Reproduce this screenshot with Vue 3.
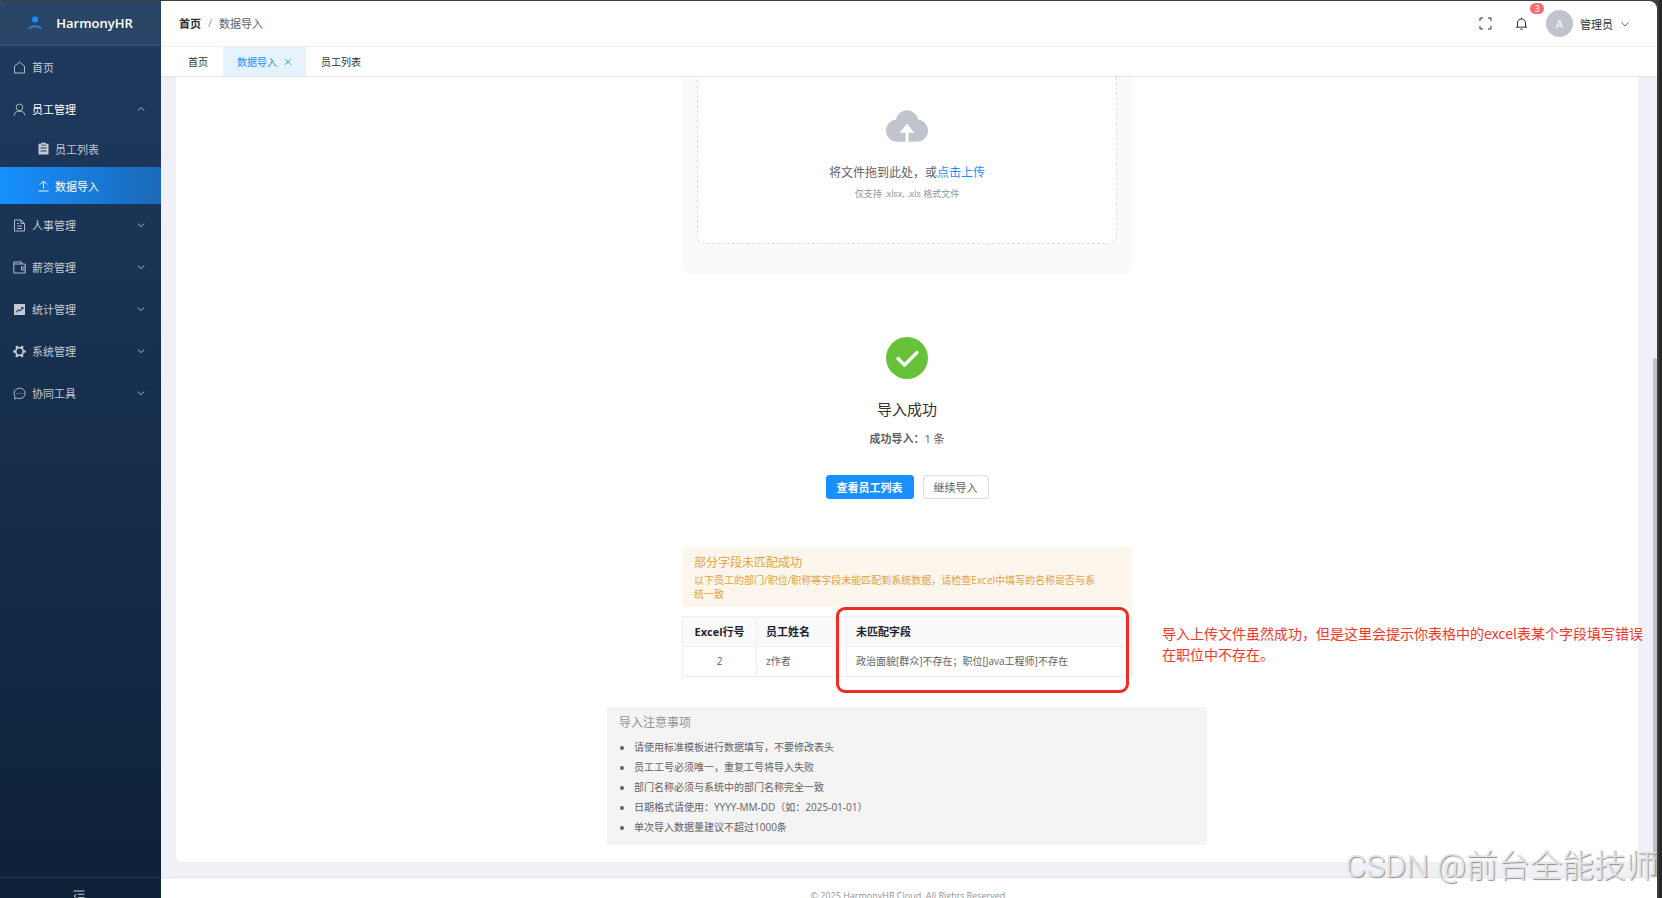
<template>
  <div class="window">
    <div class="app">
      <aside class="sidebar">
        <div class="logo">
          <svg class="logo-icon" viewBox="0 0 14 14">
            <circle cx="7" cy="3.4" r="3" />
            <path d="M0.8 12.6C4 9.6 10 9.6 13.2 12.6" />
          </svg>
          <span>HarmonyHR</span>
        </div>

        <nav class="menu">
          <template v-for="item in menus" :key="item.name">
            <button class="menu-item" :class="{ open: item.children }">
              <svg class="icon" viewBox="0 0 13 13">
                <path :class="{ solid: item.solid }" :d="item.icon" />
              </svg>
              <span class="menu-name">{{ item.name }}</span>
              <svg v-if="item.arrow" class="arrow" viewBox="0 0 8 8">
                <path :d="item.children ? 'M0.8 5.6L4 2.6L7.2 5.6' : 'M0.8 2.6L4 5.6L7.2 2.6'" />
              </svg>
            </button>
            <div v-if="item.children" class="sub-menu">
              <a
                v-for="child in item.children"
                :key="child.name"
                href="#"
                class="sub-item"
                :class="{ active: child.name === current }"
                @click.prevent="current = child.name"
              >
                <svg class="icon" viewBox="0 0 13 13">
                  <path :class="{ solid: child.solid }" :d="child.icon" />
                </svg>
                <span>{{ child.name }}</span>
              </a>
            </div>
          </template>
        </nav>

        <button class="collapse" aria-label="折叠菜单">
          <svg viewBox="0 0 12 12">
            <path d="M0.5 1H11.5M5 4.3H11.5M5 7.6H11.5M0.5 11H11.5M3.500 4L1 6L3.500 8" />
          </svg>
        </button>
      </aside>

      <div class="body">
        <header class="header">
          <div class="breadcrumb">
            <a href="#" @click.prevent>首页</a>
            <span class="slash">/</span>
            <span>数据导入</span>
          </div>
          <div class="tools">
            <button class="tool-btn" aria-label="全屏">
              <svg viewBox="0 0 13 13">
                <path d="M1 4V1H4M9 1H12V4M12 9V12H9M4 12H1V9" />
              </svg>
            </button>
            <button class="tool-btn bell" aria-label="通知">
              <svg viewBox="0 0 13 13">
                <path d="M1 10.2H12M2.5 10V6C2.5 3.5 4.2 2 6.5 2S10.5 3.5 10.5 6V10M6.5 0.6V2M5.3 12.2H7.7" />
              </svg>
              <span class="badge">3</span>
            </button>
            <button class="user">
              <span class="avatar">A</span>
              <span>管理员</span>
              <svg class="user-arrow" viewBox="0 0 8 8">
                <path d="M0.5 2.4L4 5.8L7.5 2.4" />
              </svg>
            </button>
          </div>
        </header>

        <div class="tabs">
          <button
            v-for="tab in tabs"
            :key="tab"
            class="tab"
            :class="{ active: tab === current }"
          >
            {{ tab }}
            <svg v-if="tab === current" class="close" viewBox="0 0 8 8">
              <path d="M1.2 1.2L6.8 6.8M6.8 1.2L1.2 6.8" />
            </svg>
          </button>
        </div>

        <main class="main">
          <div class="card">
            <section class="upload">
              <div class="dragger">
                <svg class="cloud" viewBox="64 192 896 672">
                  <path d="M544 864V672h128L512 480 352 672h128v192H320v-1.6c-5.4.3-10.5 1.6-16 1.6A240 240 0 0 1 64 624c0-123 93-223.500 212.600-237.200A239.800 239.800 0 0 1 512 192a239.900 239.900 0 0 1 235.500 194.800C867 400.500 960 501 960 624a240 240 0 0 1-240 240c-5.400 0-10.600-1.300-16-1.600v1.600z" />
                </svg>
                <p class="drag-text">将文件拖到此处，或<a href="#" @click.prevent>点击上传</a></p>
                <p class="drag-tip">仅支持 .xlsx, .xls 格式文件</p>
              </div>
            </section>

            <section class="result">
              <svg class="success" viewBox="0 0 42 42">
                <circle cx="21" cy="21" r="21" />
                <path d="M12 21.500L18.500 28L31 15.500" />
              </svg>
              <h2>导入成功</h2>
              <p><strong>成功导入：</strong>1 条</p>
              <div class="actions">
                <button class="btn primary">查看员工列表</button>
                <button class="btn">继续导入</button>
              </div>
            </section>

            <section class="unmatched">
              <div class="alert">
                <h3>部分字段未匹配成功</h3>
                <p>以下员工的部门/职位/职称等字段未能匹配到系统数据，请检查Excel中填写的名称是否与系<br>统一致</p>
              </div>
              <table>
                <thead>
                  <tr>
                    <th class="col-row">Excel行号</th>
                    <th class="col-name">员工姓名</th>
                    <th>未匹配字段</th>
                  </tr>
                </thead>
                <tbody>
                  <tr v-for="row in rows" :key="row.line">
                    <td class="col-row">{{ row.line }}</td>
                    <td>{{ row.name }}</td>
                    <td>{{ row.fields }}</td>
                  </tr>
                </tbody>
              </table>
              <div class="mark"></div>
              <p class="note">导入上传文件虽然成功，但是这里会提示你表格中的excel表某个字段填写错误<br>在职位中不存在。</p>
            </section>

            <section class="tips">
              <h3>导入注意事项</h3>
              <ul>
                <li v-for="tip in tips" :key="tip">{{ tip }}</li>
              </ul>
            </section>
          </div>
          <div class="scrollbar"></div>
        </main>

        <footer class="footer">© 2025 HarmonyHR Cloud. All Rights Reserved.</footer>
      </div>
    </div>
    <div class="watermark">CSDN @前台全能技师</div>
  </div>
</template>

<script setup>
import { ref } from 'vue'

const current = ref('数据导入')

const menus = [
  { name: '首页', icon: 'M1.500 5.200L6.500 1L11.500 5.200V12H1.500Z' },
  {
    name: '员工管理',
    icon: 'M6.500 1A3.300 3.300 0 1 1 6.500 7.600A3.300 3.300 0 1 1 6.500 1M1.200 12.500C1.400 10 2.500 8.800 4.500 8.400H8.500C10.500 8.800 11.600 10 11.800 12.500',
    arrow: true,
    children: [
      {
        name: '员工列表',
        icon: 'M1.500 1.800H4V0.800H9V1.800H11.500V12.500H1.500ZM4 2.800V3.600H9V2.800ZM3.500 5.500V6.500H9.500V5.500ZM3.500 8.500V9.500H9.500V8.500Z',
        solid: true
      },
      { name: '数据导入', icon: 'M1.500 12H11.500M6.500 9.500V2M3 5.500L6.500 2L10 5.500' }
    ]
  },
  { name: '人事管理', icon: 'M1.500 1H8L11.500 4.500V12H1.500ZM8 1V4.500H11.500M4 4.500H6M4 7H9M4 9.500H9', arrow: true },
  { name: '薪资管理', icon: 'M8.500 3V1H0.800V12H12.200V3H0.800M12 6H8.500V9H12M9.800 7.500H10.600', arrow: true },
  {
    name: '统计管理',
    icon: 'M1 1H12V12H1ZM2.600 9.100L3.200 9.700L5.500 7.400L7.200 8.400L9.700 5.600V6.500H10.400V4H7.900V4.700H9.100L7 7.200L5.300 6.300Z',
    arrow: true,
    solid: true
  },
  {
    name: '系统管理',
    icon: 'M4.300 0.500L5.500 2H7.500L8.700 0.500L10.700 1.700L10 3.500L11 5.200L12.800 5.400V7.600L11 7.800L10 9.500L10.700 11.300L8.700 12.500L7.500 11H5.500L4.300 12.500L2.300 11.300L3 9.500L2 7.800L0.200 7.600V5.400L2 5.200L3 3.500L2.300 1.700ZM6.500 3.600A2.900 2.900 0 1 0 6.500 9.400A2.900 2.900 0 1 0 6.500 3.600Z',
    arrow: true,
    solid: true
  },
  {
    name: '协同工具',
    icon: 'M1.500 12L2 9.500C-0.500 5 2.500 1.200 6.700 1.200C13.800 1.200 13.800 11.500 6.700 11.500C5.500 11.500 4.500 11.300 3.800 11ZM3.600 6.500H4.400M6.200 6.500H7M8.800 6.500H9.600',
    arrow: true
  }
]

const tabs = ['首页', '数据导入', '员工列表']

const rows = [
  { line: 2, name: 'z作者', fields: '政治面貌[群众]不存在；职位[Java工程师]不存在' }
]

const tips = [
  '请使用标准模板进行数据填写，不要修改表头',
  '员工工号必须唯一，重复工号将导入失败',
  '部门名称必须与系统中的部门名称完全一致',
  '日期格式请使用：YYYY-MM-DD（如：2025-01-01）',
  '单次导入数据量建议不超过1000条'
]
</script>

<style>
body {
  margin: 0;
  background: #38393b;
}
</style>

<style scoped>
.window {
  position: relative;
  box-sizing: border-box;
  height: 100vh;
  padding: 1px 5px 0 0;
  overflow: hidden;
  background: linear-gradient(to left, #262828 3px, #3d3f3f 3px);
  font-family: "Open Sans", "Noto Sans CJK SC", sans-serif;
  font-size: 11px;
  color: #303133;
}

/* 页面比窗口略高，页脚被截断 */
.app {
  display: flex;
  height: calc(100vh + 15px);
  border-radius: 4px 8px 0 0;
  overflow: hidden;
  background: #fff;
}

button {
  margin: 0;
  padding: 0;
  border: none;
  background: none;
  font: inherit;
  color: inherit;
  cursor: pointer;
}

a {
  text-decoration: none;
  color: inherit;
}

h2, h3, p, ul {
  margin: 0;
  padding: 0;
  font-weight: normal;
}

svg {
  display: block;
  fill: none;
  stroke: currentColor;
}

/* 侧边栏 */
.sidebar {
  display: flex;
  flex-direction: column;
  flex: none;
  width: 161px;
  background: linear-gradient(180deg, #1e3a5f 0%, #0d2137 100%);
  color: #c3cad3;
}

.logo {
  display: flex;
  align-items: center;
  justify-content: center;
  gap: 14px;
  height: 44px;
  border-bottom: 1px solid #3c5473;
  background: #2a4566;
  color: #fff;
  font-size: 13px;
  font-weight: 600;
}

.logo-icon {
  width: 14px;
  height: 14px;
  color: #1890ff;
  stroke-width: 1.5;
}

.logo-icon circle {
  fill: currentColor;
  stroke: none;
}

.menu {
  flex: 1;
}

.menu-item {
  display: flex;
  align-items: center;
  gap: 6px;
  width: 100%;
  height: 42px;
  padding: 0 16px 0 13px;
  text-align: left;
}

.menu-item.open {
  color: #fff;
}

.menu-name {
  flex: 1;
}

.icon {
  width: 13px;
  height: 13px;
  color: #c3cad3;
  stroke-width: 0.9;
}

.solid {
  fill: currentColor;
  fill-rule: evenodd;
  stroke: none;
}

.arrow {
  width: 8px;
  height: 8px;
  color: #a9b3c0;
}

.sub-item {
  display: flex;
  align-items: center;
  gap: 5px;
  height: 37px;
  padding-left: 37px;
}

.sub-item.active,
.sub-item.active .icon {
  color: #fff;
}

.sub-item.active {
  background: linear-gradient(90deg, #1890ff 0%, #1a69b8 100%);
}

.collapse {
  display: flex;
  align-items: center;
  justify-content: center;
  height: 37px;
  padding-right: 4px;
  border-top: 1px solid #263a50;
}

.collapse svg {
  width: 12px;
  height: 12px;
}

/* 顶部 */
.body {
  display: flex;
  flex-direction: column;
  flex: 1;
  min-width: 0;
}

.header {
  display: flex;
  align-items: center;
  justify-content: space-between;
  height: 45px;
  padding: 0 28px 0 18px;
  border-bottom: 1px solid #f0f0f0;
}

.breadcrumb {
  display: flex;
  padding-bottom: 2px;
  color: #606266;
}

.breadcrumb a {
  color: #303133;
  font-weight: 700;
}

.slash {
  margin: 0 7px;
  color: #909399;
}

.tools,
.user {
  display: flex;
  align-items: center;
}

.tool-btn {
  position: relative;
  margin-right: 23px;
}

.tool-btn svg {
  width: 13px;
  height: 13px;
}

.tool-btn.bell {
  margin-right: 18px;
}

.badge {
  position: absolute;
  left: 15px;
  top: -14px;
  width: 14px;
  height: 11px;
  border-radius: 6px;
  background: #f56c6c;
  color: #fff;
  font-size: 9px;
  line-height: 11px;
  text-align: center;
}

.avatar {
  width: 27px;
  height: 27px;
  margin-right: 7px;
  border-radius: 50%;
  background: #c0c4cc;
  color: #fff;
  line-height: 27px;
}

.user-arrow {
  width: 8px;
  height: 8px;
  margin-left: 8px;
  color: #606266;
}

.tabs {
  display: flex;
  height: 29px;
  padding-left: 12px;
  border-bottom: 1px solid #e4e4e6;
}

.tab {
  display: flex;
  align-items: center;
  gap: 7px;
  padding: 0 15px;
  font-size: 10px;
}

.tab.active {
  padding: 0 14px;
  background: #e6f3ff;
  color: #1890ff;
}

.close {
  width: 8px;
  height: 8px;
  stroke-width: 0.8;
}

/* 内容区 */
.main {
  position: relative;
  flex: 1;
  min-height: 0;
  padding: 0 19px 15px 15px;
  overflow: hidden;
  background: #eff1f6;
}

.card {
  display: flex;
  flex-direction: column;
  align-items: center;
  box-sizing: border-box;
  height: 100%;
  border-radius: 0 0 6px 6px;
  background: #fff;
}

.scrollbar {
  position: absolute;
  top: 281px;
  right: 0;
  bottom: 0;
  width: 4px;
  border-radius: 2px 2px 0 0;
  background: #c1c1c1;
}

.upload {
  box-sizing: border-box;
  width: 450px;
  padding: 0 15px 30px;
  border-radius: 0 0 8px 8px;
  background: #fafafa;
}

.dragger {
  display: flex;
  flex-direction: column;
  align-items: center;
  padding: 33px 0 42px;
  border: 1px dashed #dcdfe6;
  border-top: none;
  border-radius: 0 0 8px 8px;
  background: #fff;
}

.cloud {
  width: 42px;
  height: 32px;
  margin-bottom: 21px;
  fill: #c0c4cc;
  stroke: none;
}

.drag-text {
  font-size: 12px;
  line-height: 20px;
  color: #606266;
}

.drag-text a {
  color: #1890ff;
}

.drag-tip {
  margin-top: 4px;
  font-size: 9px;
  line-height: 14px;
  color: #909399;
}

.result {
  display: flex;
  flex-direction: column;
  align-items: center;
  padding: 63px 0 48px;
}

.success {
  width: 42px;
  height: 42px;
}

.success circle {
  fill: #67c23a;
  stroke: none;
}

.success path {
  stroke: #fff;
  stroke-width: 3.4;
  stroke-linecap: round;
  stroke-linejoin: round;
}

.result h2 {
  margin-top: 20px;
  font-size: 15px;
  line-height: 20px;
}

.result p {
  margin-top: 12px;
  line-height: 16px;
  color: #606266;
}

.actions {
  display: flex;
  gap: 9px;
  margin-top: 28px;
}

.btn {
  height: 24px;
  padding: 0 10px;
  border: 1px solid #dcdfe6;
  border-radius: 3px;
  background: #fff;
  color: #606266;
}

.btn.primary {
  border-color: #1890ff;
  background: #1890ff;
  color: #fff;
  font-weight: 700;
}

.unmatched {
  position: relative;
  width: 450px;
}

.alert {
  padding: 6px 12px;
  border-radius: 3px;
  background: #fdf6ec;
  color: #e6a23c;
}

.alert h3 {
  font-size: 12px;
  line-height: 20px;
}

.alert p {
  font-size: 10px;
  line-height: 14px;
}

table {
  width: 100%;
  margin-top: 9px;
  border-collapse: collapse;
  table-layout: fixed;
}

th,
td {
  box-sizing: border-box;
  height: 30px;
  padding: 0 9px 2px;
  border: 1px solid #ebeef5;
  text-align: left;
}

th {
  background: #fafafa;
  color: #1f2430;
  font-weight: 700;
}

td {
  font-size: 10px;
  color: #606266;
}

.col-row {
  width: 74px;
  text-align: center;
}

.col-name {
  width: 90px;
}

/* 截图标注 */
.mark {
  position: absolute;
  left: 154px;
  top: 60px;
  width: 287px;
  height: 80px;
  border: 3px solid #f52b22;
  border-radius: 9px;
}

.note {
  position: absolute;
  left: 480px;
  top: 76px;
  font-family: "Noto Sans CJK SC", sans-serif;
  font-size: 14px;
  line-height: 21px;
  white-space: nowrap;
  color: #f5352b;
}

.tips {
  box-sizing: border-box;
  width: 600px;
  margin-top: 30px;
  padding: 6px 12px 8px;
  border-radius: 3px;
  background: #f4f4f5;
}

.tips h3 {
  font-size: 12px;
  line-height: 20px;
  color: #909399;
}

.tips ul {
  margin-top: 4px;
  padding-left: 15px;
  font-size: 10px;
  line-height: 20px;
  color: #606266;
}

.footer {
  height: 36px;
  border-top: 1px solid #e4e4e6;
  font-size: 9px;
  line-height: 36px;
  text-align: center;
  color: #909399;
}

.watermark {
  position: absolute;
  right: 4px;
  bottom: 8px;
  font-family: Roboto, "Noto Sans CJK SC", sans-serif;
  font-size: 32px;
  font-weight: 300;
  line-height: 48px;
  white-space: nowrap;
  color: #e4e4e6;
  text-shadow: 1px 1px 1px #8c8c8c;
}
</style>
